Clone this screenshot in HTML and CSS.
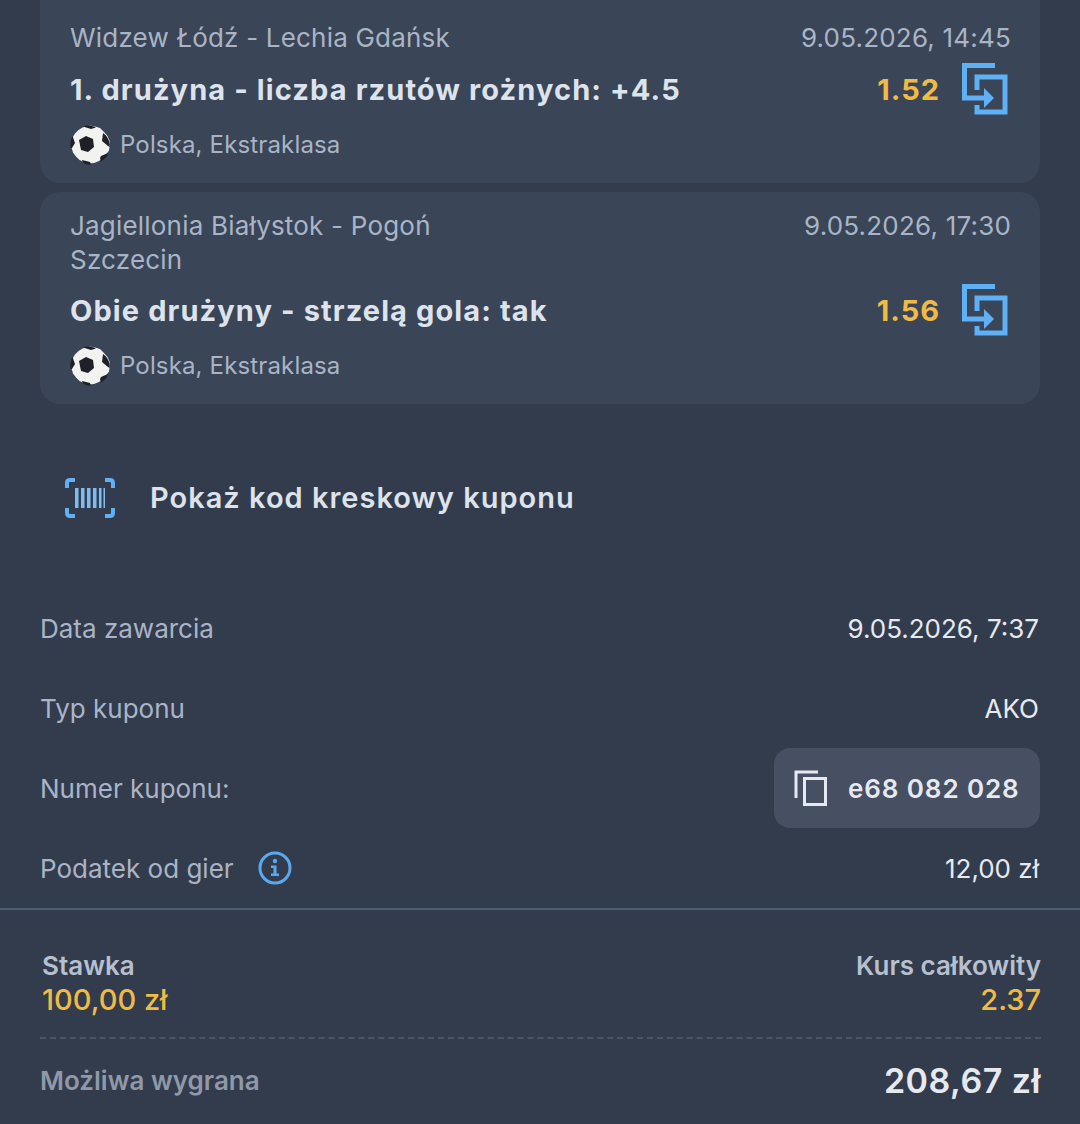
FILE: index.html
```html
<!DOCTYPE html>
<html lang="pl">
<head>
    <meta charset="UTF-8">
    <meta name="viewport" content="width=device-width, initial-scale=1.0">
    <title>Kupon</title>
    <link rel="stylesheet" href="styles.css">
</head>

<body>
    <svg class="sprites" width="0" height="0">
        <symbol id="ball" viewBox="0 0 40 40">
            <path d="M20 .5l5 1 5 1.500 4 4 3.500 4 2 4.500.2 5-.7 5-3 4-3 3.500-4 3-5 2-5 .5-5-1.500-4.500-2-3.500-3.500-3-4-1.500-5-.5-5 1.500-5 2.500-4 3.500-3.500 4-2.500z" fill="#f2f2f0"/>
            <path d="M9 15l7-4 7 3 1 8-6 5-7-2z" fill="#1d2026"/>
            <path d="M13 1.500l8 2.500 5-1.500C21 .2 16 .2 13 1.500zM33 8l-1 8 6 5 1.800 1C40 16 37.500 11 33 8zM2.500 11l2.500 7-3 5-1.500 0C0 19 .5 15 2.500 11zM30 33l1-2 7-3-1 3c-1.500 2-4 4-6 5.500zM12 35l8 2 1 2.500c-3 .5-6-.5-8-2z" fill="#1d2026"/>
        </symbol>
        <symbol id="swap" viewBox="0 0 46 52">
            <path d="M33 2.500H2.500V35H25" fill="none" stroke="#5fb0f5" stroke-width="5"/>
            <path d="M15 27V14H43V49H15V42" fill="none" stroke="#5fb0f5" stroke-width="5"/>
            <path d="M22 25l10 10-10 10z" fill="#5fb0f5"/>
        </symbol>
    </svg>

    <div class="events">
        <div class="event event-first">
            <div class="event-top">
                <div class="teams">Widzew Łódź - Lechia Gdańsk</div>
                <div class="date">9.05.2026, 14:45</div>
            </div>
            <div class="event-mid">
                <div class="market">1. drużyna - liczba rzutów rożnych: +4.5</div>
                <div class="odd">1.52</div>
                <svg class="swap-icon"><use href="#swap"/></svg>
            </div>
            <div class="league">
                <svg class="ball"><use href="#ball"/></svg>
                <span>Polska, Ekstraklasa</span>
            </div>
        </div>

        <div class="event">
            <div class="event-top">
                <div class="teams teams-wrap">Jagiellonia Białystok - Pogoń Szczecin</div>
                <div class="date">9.05.2026, 17:30</div>
            </div>
            <div class="event-mid">
                <div class="market">Obie drużyny - strzelą gola: tak</div>
                <div class="odd">1.56</div>
                <svg class="swap-icon"><use href="#swap"/></svg>
            </div>
            <div class="league">
                <svg class="ball"><use href="#ball"/></svg>
                <span>Polska, Ekstraklasa</span>
            </div>
        </div>
    </div>

    <div class="barcode-row">
        <svg class="barcode-icon" viewBox="0 0 50 40">
            <path d="M10 2H5Q2 2 2 5V10M40 2H45Q48 2 48 5V10M2 30V35Q2 38 5 38H10M48 30V35Q48 38 45 38H40" fill="none" stroke="#5fb0f5" stroke-width="4"/>
            <path d="M10 10h3.500v20h-3.500zM16 10h3.500v20h-3.500zM22 10h3.500v20h-3.500zM28 10h3.500v20h-3.500zM34 10h2.500v20h-2.500zM38.500 10h1.500v20h-1.500z" fill="#7dbdf2"/>
        </svg>
        <span>Pokaż kod kreskowy kuponu</span>
    </div>

    <div class="details">
        <div class="detail">
            <span class="detail-label">Data zawarcia</span>
            <span class="detail-value">9.05.2026, 7:37</span>
        </div>
        <div class="detail">
            <span class="detail-label">Typ kuponu</span>
            <span class="detail-value">AKO</span>
        </div>
        <div class="detail">
            <span class="detail-label">Numer kuponu:</span>
            <div class="coupon-chip">
                <svg class="copy-icon" viewBox="0 0 34 36">
                    <path d="M24 2H2V28" fill="none" stroke="#e6eaf0" stroke-width="3"/>
                    <path d="M10.500 8.500H31.500V34.500H10.500z" fill="none" stroke="#e6eaf0" stroke-width="3"/>
                </svg>
                <span>e68 082 028</span>
            </div>
        </div>
        <div class="detail">
            <span class="detail-label label-info">
                Podatek od gier
                <svg class="info-icon" viewBox="0 0 34 34">
                    <circle cx="17" cy="17" r="15" fill="none" stroke="#5aa9ee" stroke-width="3"/>
                    <circle cx="17" cy="10" r="2.200" fill="#5aa9ee"/>
                    <path d="M13 14.500h5.500v8H21v2.500h-8v-2.500h2.500v-5.500H13z" fill="#5aa9ee"/>
                </svg>
            </span>
            <span class="detail-value">12,00 zł</span>
        </div>
    </div>

    <div class="summary">
        <div class="summary-top">
            <div class="summary-left">
                <div class="summary-label">Stawka</div>
                <div class="summary-amount">100,00 zł</div>
            </div>
            <div class="align-right">
                <div class="summary-label">Kurs całkowity</div>
                <div class="summary-amount">2.37</div>
            </div>
        </div>
        <div class="win-row">
            <span class="win-label">Możliwa wygrana</span>
            <span class="win-value">208,67 zł</span>
        </div>
    </div>
</body>
</html>
```

FILE: styles.css
```css
body {
    font-family: 'Inter', 'Liberation Sans', sans-serif;
    margin: 0;
    width: 1080px;
    height: 1124px;
    overflow: hidden;
    background-color: #333c4d;
    color: #e6eaf0;
}

.sprites {
    display: block;
}

.events {
    display: flex;
    flex-direction: column;
    gap: 9px;
    padding: 0 40px;
}

.event {
    background-color: #3a4557;
    border-radius: 20px;
    padding: 17px 29px 18.5px 30px;
}

.event-first {
    border-radius: 0 0 20px 20px;
    padding-top: 21px;
    padding-bottom: 18.5px;
}

.event-top {
    display: flex;
    justify-content: space-between;
    font-size: 26px;
    line-height: 34px;
    color: #a9b5c6;
    letter-spacing: 0.2px;
}

.teams-wrap {
    width: 400px;
}

.event-mid {
    display: flex;
    align-items: center;
    height: 52px;
    margin-top: 7px;
}

.event-first .event-mid {
    margin-top: 8px;
}

.market {
    flex: 1;
    font-size: 29px;
    font-weight: 700;
    color: #dde3ec;
    letter-spacing: 1.1px;
}

.odd {
    font-size: 29px;
    font-weight: 700;
    color: #f0bb45;
    margin-right: 22px;
    letter-spacing: 1px;
}

.swap-icon {
    width: 46px;
    height: 52px;
    margin-right: 3px;
}

.league {
    display: flex;
    align-items: center;
    gap: 10px;
    margin-top: 9.5px;
    height: 40px;
    font-size: 24px;
    color: #a9b5c6;
    letter-spacing: 0.15px;
}

.ball {
    width: 40px;
    height: 40px;
}

.barcode-row {
    display: flex;
    align-items: center;
    gap: 35px;
    margin-top: 73.5px;
    padding-left: 65px;
    height: 40px;
    font-size: 29px;
    font-weight: 600;
    color: #dde3ec;
    letter-spacing: 1px;
}

.barcode-icon {
    width: 50px;
    height: 40px;
}

.details {
    display: flex;
    flex-direction: column;
    margin-top: 70.5px;
    padding: 0 41px 0 40px;
}

.detail {
    display: flex;
    justify-content: space-between;
    align-items: center;
    height: 80px;
    font-size: 26px;
}

.detail-label {
    color: #a9b5c6;
}

.label-info {
    display: flex;
    align-items: center;
    gap: 24px;
}

.info-icon {
    width: 34px;
    height: 34px;
}

.detail-value {
    color: #e6eaf0;
}

.coupon-chip {
    display: flex;
    align-items: center;
    gap: 20px;
    width: 266px;
    height: 80px;
    box-sizing: border-box;
    padding-left: 20px;
    margin-right: -1px;
    border-radius: 16px;
    background-color: #475062;
    font-weight: 600;
    letter-spacing: 0.9px;
}

.copy-icon {
    width: 34px;
    height: 36px;
}

.summary {
    border-top: 2px solid #4c5f72;
    padding: 39px 39px 0 40px;
}

.summary-top {
    display: flex;
    justify-content: space-between;
    padding-bottom: 20px;
    border-bottom: 2px dashed #4a5566;
}

.summary-left {
    padding-left: 2px;
}

.align-right {
    text-align: right;
}

.summary-label {
    font-size: 26px;
    line-height: 34px;
    font-weight: 600;
    color: #b7c0ce;
}

.summary-amount {
    font-size: 29px;
    line-height: 34px;
    font-weight: 500;
    color: #f0bb45;
}

.win-row {
    display: flex;
    justify-content: space-between;
    align-items: center;
    margin-top: 21px;
}

.win-label {
    font-size: 26px;
    font-weight: 600;
    color: #8f99a8;
}

.win-value {
    font-size: 34px;
    font-weight: 600;
    color: #e6eaf0;
    letter-spacing: 0.5px;
}
```
